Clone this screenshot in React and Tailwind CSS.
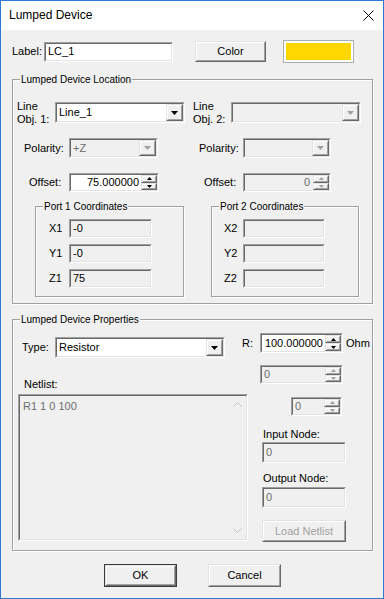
import React from 'react';

// classic win32 3D borders
const Sunken = ({ className = '', bg = 'bg-white', children }) => (
  <div className={`border border-t-[#a0a0a0] border-l-[#a0a0a0] border-b-white border-r-white ${className}`}>
    <div className={`h-full w-full flex items-stretch border border-t-[#696969] border-l-[#696969] border-b-[#e3e3e3] border-r-[#e3e3e3] ${bg}`}>
      {children}
    </div>
  </div>
);

const Raised = ({ className = '', children }) => (
  <div className={`border border-t-[#e3e3e3] border-l-[#e3e3e3] border-b-[#696969] border-r-[#696969] bg-[#f0f0f0] ${className}`}>
    <div className="h-full w-full flex items-center justify-center border border-t-white border-l-white border-b-[#a0a0a0] border-r-[#a0a0a0]">
      {children}
    </div>
  </div>
);

const Tri = ({ up = false, small = false, disabled = false }) => {
  const w = small ? 5 : 7;
  const h = small ? 3 : 4;
  const pts = up ? `0,${h} ${w},${h} ${w / 2},0` : `0,0 ${w},0 ${w / 2},${h}`;
  return (
    <svg width={w} height={h} viewBox={`0 0 ${w} ${h}`}>
      <polygon points={pts} fill={disabled ? '#a0a0a0' : '#000'} />
    </svg>
  );
};

const Combo = ({ className = '', value = '', disabled = false }) => (
  <Sunken className={className} bg={disabled ? 'bg-[#f0f0f0]' : 'bg-white'}>
    <div className={`flex-1 flex items-center pl-[2px] ${disabled ? 'text-[#6d6d6d]' : 'text-black'}`}>{value}</div>
    <Raised className="w-[17px] h-full">
      <Tri disabled={disabled} />
    </Raised>
  </Sunken>
);

const Spin = ({ className = '', value = '', disabled = false }) => (
  <Sunken className={className} bg={disabled ? 'bg-[#f0f0f0]' : 'bg-white'}>
    <div className={`flex-1 flex items-center ${value.length > 3 ? 'justify-end pr-[2px]' : 'pl-[2px]'} ${disabled ? 'text-[#6d6d6d]' : 'text-black'}`}>
      {value}
    </div>
    <div className="w-[16px] h-full flex flex-col">
      <Raised className="flex-1">
        <Tri up small disabled={disabled} />
      </Raised>
      <Raised className="flex-1">
        <Tri small disabled={disabled} />
      </Raised>
    </div>
  </Sunken>
);

const Edit = ({ className = '', value = '', gray = false, dim = false }) => (
  <Sunken className={className} bg={gray ? 'bg-[#f0f0f0]' : 'bg-white'}>
    <div className={`flex-1 flex items-center pl-[2px] ${dim ? 'text-[#6d6d6d]' : 'text-black'}`}>{value}</div>
  </Sunken>
);

const Group = ({ className = '', title, children }) => (
  <div className={`relative border border-[#a0a0a0] shadow-[inset_1px_1px_0_#fff,1px_1px_0_#fff] ${className}`}>
    <span className="absolute left-[7px] -top-[7px] px-[1px] bg-[#f0f0f0] text-[10px] leading-[14px]">{title}</span>
    {children}
  </div>
);

export default function App() {
  return (
    <div className="w-[384px] h-[599px] border border-[#2b7bd4] bg-[#f0f0f0] flex flex-col font-['Liberation_Sans',Arial,sans-serif] text-[11px] leading-[13px] text-black">
      {/* title bar */}
      <div className="h-[29px] shrink-0 bg-white flex items-center pl-[8px] pr-[9px]">
        <span className="text-[12px]">Lumped Device</span>
        <svg className="ml-auto" width="11" height="11" viewBox="0 0 11 11">
          <path d="M0.5 0.5 L10.5 10.5 M10.5 0.5 L0.5 10.5" stroke="#000" strokeWidth="1" />
        </svg>
      </div>

      <div className="pl-[11px]">
        {/* label row */}
        <div className="mt-[10px] h-[23px] flex items-center">
          <span className="w-[32px]">Label:</span>
          <Edit className="w-[129px] h-[20px]" value="LC_1" />
          <Raised className="ml-[22px] w-[71px] h-[21px]">Color</Raised>
          <div className="ml-[17px] w-[71px] h-[23px] border border-[#adadad] p-[2px] bg-white">
            <div className="h-full w-full bg-[#ffd700]" />
          </div>
        </div>

        {/* location */}
        <Group className="mt-[16px] w-[361px] h-[225px]" title="Lumped Device Location">
          <div className="mt-[22px] h-[21px] flex items-center pl-[4px]">
            <div className="w-[38px]">Line<br />Obj. 1:</div>
            <Combo className="w-[130px] h-[21px]" value="Line_1" />
            <div className="ml-[8px] w-[38px]">Line<br />Obj. 2:</div>
            <Combo className="w-[130px] h-[21px]" disabled />
          </div>

          <div className="mt-[15px] h-[20px] flex items-center pl-[11px]">
            <span className="w-[45px]">Polarity:</span>
            <Combo className="w-[89px] h-[20px]" value="+Z" disabled />
            <span className="ml-[41px] w-[44px]">Polarity:</span>
            <Combo className="w-[88px] h-[20px]" disabled />
          </div>

          <div className="mt-[15px] h-[19px] flex items-center pl-[16px]">
            <span className="w-[40px]">Offset:</span>
            <Spin className="w-[90px] h-[19px]" value="75.000000" />
            <span className="ml-[45px] w-[39px]">Offset:</span>
            <div className="w-[88px] h-[19px]">
              <Sunken className="w-full h-full" bg="bg-[#f0f0f0]">
                <div className="flex-1 flex items-center justify-end pr-[3px] text-[#6d6d6d]">0</div>
                <div className="w-[16px] h-full flex flex-col">
                  <Raised className="flex-1"><Tri up small disabled /></Raised>
                  <Raised className="flex-1"><Tri small disabled /></Raised>
                </div>
              </Sunken>
            </div>
          </div>

          <div className="mt-[14px] flex">
            <Group className="ml-[22px] w-[149px] h-[91px]" title="Port 1 Coordinates">
              <div className="mt-[12px] flex flex-col gap-[6px] pl-[13px]">
                {[['X1', '-0'], ['Y1', '-0'], ['Z1', '75']].map(([k, v]) => (
                  <div key={k} className="h-[19px] flex items-center">
                    <span className="w-[20px]">{k}</span>
                    <Edit className="w-[83px] h-[19px]" value={v} gray />
                  </div>
                ))}
              </div>
            </Group>
            <Group className="ml-[27px] w-[148px] h-[91px]" title="Port 2 Coordinates">
              <div className="mt-[12px] flex flex-col gap-[6px] pl-[12px]">
                {['X2', 'Y2', 'Z2'].map(k => (
                  <div key={k} className="h-[19px] flex items-center">
                    <span className="w-[19px]">{k}</span>
                    <Edit className="w-[82px] h-[19px]" gray />
                  </div>
                ))}
              </div>
            </Group>
          </div>
        </Group>

        {/* properties */}
        <Group className="mt-[15px] w-[361px] h-[232px]" title="Lumped Device Properties">
          <div className="flex">
            <div className="w-[236px] flex flex-col">
              <div className="mt-[17px] h-[21px] flex items-center pl-[9px]">
                <span className="w-[33px]">Type:</span>
                <Combo className="w-[170px] h-[21px]" value="Resistor" />
              </div>
              <div className="mt-[20px] ml-[11px]">Netlist:</div>
              <Sunken className="mt-[3px] ml-[5px] w-[230px] h-[147px]" bg="bg-[#f0f0f0]">
                <div className="flex-1 pl-[3px] pt-[4px] text-[#6d6d6d]">R1 1 0 100</div>
                <div className="w-[17px] flex flex-col items-center justify-between py-[6px]">
                  <svg width="9" height="5" viewBox="0 0 9 5">
                    <polyline points="0.5,4.5 4.5,0.5 8.5,4.5" fill="none" stroke="#c4c4c4" />
                  </svg>
                  <svg width="9" height="5" viewBox="0 0 9 5">
                    <polyline points="0.5,0.5 4.5,4.5 8.5,0.5" fill="none" stroke="#c4c4c4" />
                  </svg>
                </div>
              </Sunken>
            </div>

            <div className="flex flex-col">
              <div className="mt-[13px] h-[20px] flex items-center -ml-[7px]">
                <span className="w-[18px]">R:</span>
                <Spin className="w-[83px] h-[20px]" value="100.000000" />
                <span className="ml-[3px]">Ohm</span>
              </div>
              <Spin className="mt-[12px] ml-[11px] w-[83px] h-[19px]" value="0" disabled />
              <Spin className="mt-[13px] ml-[42px] w-[51px] h-[19px]" value="0" disabled />
              <div className="mt-[12px] ml-[14px]">Input Node:</div>
              <Edit className="mt-[1px] ml-[13px] w-[84px] h-[21px]" value="0" gray dim />
              <div className="mt-[9px] ml-[14px]">Output Node:</div>
              <Edit className="mt-[2px] ml-[13px] w-[84px] h-[21px]" value="0" gray dim />
              <Raised className="mt-[12px] ml-[13px] w-[84px] h-[22px]">
                <span className="text-[#a0a0a0]">Load Netlist</span>
              </Raised>
            </div>
          </div>
        </Group>

        {/* buttons */}
        <div className="mt-[13px] flex">
          <div className="ml-[92px] w-[73px] h-[23px] border border-[#3c3c3c]">
            <Raised className="w-full h-full">OK</Raised>
          </div>
          <Raised className="ml-[31px] w-[73px] h-[23px]">Cancel</Raised>
        </div>
      </div>
    </div>
  );
}
